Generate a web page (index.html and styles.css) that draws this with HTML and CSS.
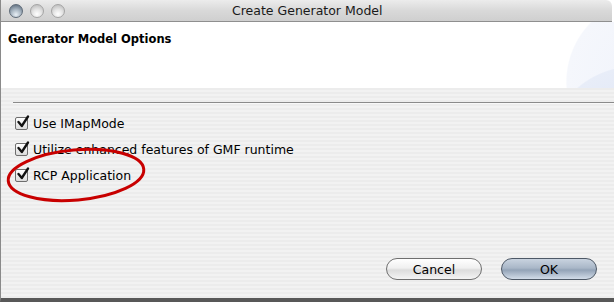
FILE: index.html
```html
<!DOCTYPE html>
<html lang="en">
<head>
  <meta charset="UTF-8">
  <title>Create Generator Model</title>
  <link rel="stylesheet" href="styles.css">
</head>
<body>
  <div class="window">
    <div class="titlebar">
      <div class="lights">
        <span class="light close"></span>
        <span class="light"></span>
        <span class="light"></span>
      </div>
      <div class="title">Create Generator Model</div>
    </div>

    <div class="banner">
      <h1>Generator Model Options</h1>
    </div>

    <div class="content">
      <div class="separator"></div>

      <div class="options">
        <label class="option"><span class="check"><svg viewBox="0 0 14 14"><path d="M2.5 7 L5.8 11 L12 1.5" /></svg></span>Use IMapMode</label>
        <label class="option"><span class="check"><svg viewBox="0 0 14 14"><path d="M2.5 7 L5.8 11 L12 1.5" /></svg></span>Utilize enhanced features of GMF runtime</label>
        <label class="option"><span class="check"><svg viewBox="0 0 14 14"><path d="M2.5 7 L5.8 11 L12 1.5" /></svg></span>RCP Application</label>
      </div>

      <!-- hand-drawn annotation around the last option -->
      <svg class="circle" viewBox="0 0 144 60">
        <ellipse cx="71" cy="29" rx="68" ry="25" transform="rotate(-5 71 29)" />
      </svg>

      <div class="actions">
        <button class="btn">Cancel</button>
        <button class="btn default">OK</button>
      </div>
    </div>
  </div>
</body>
</html>
```

FILE: styles.css
```css
body {
  margin: 0;
  padding: 0;
  background: #fff;
  font-family: "DejaVu Sans", "Liberation Sans", sans-serif;
  font-size: 13px;
  color: #000;
}
.window {
  width: 614px;
  height: 302px;
  display: flex;
  flex-direction: column;
  box-sizing: border-box;
  border-left: 1px solid #8a8a8a;
  border-bottom: 4px solid #585858;
  overflow: hidden;
}
.titlebar {
  height: 21px;
  flex: none;
  display: flex;
  align-items: center;
  background: linear-gradient(#ececec, #d9d9d9 50%, #cfcfcf);
  border-bottom: 1px solid #8f8f8f;
  border-top-right-radius: 6px;
  margin-right: 2px;
}
.lights {
  display: flex;
  gap: 7px;
  padding-left: 8px;
  width: 200px;
}
.light {
  width: 14px;
  height: 14px;
  border-radius: 50%;
  border: 1px solid #a5a5a5;
  background: radial-gradient(circle at 50% 75%, #ffffff 0, #e6e6e6 40%, #c4c4c4 80%);
  box-sizing: border-box;
}
.light.close {
  border-color: #5f6b78;
  background: radial-gradient(circle at 50% 80%, #e9f0f6 0, #a9b6c2 45%, #5f6f80 90%);
}
.title {
  font-size: 12.5px;
  color: #1a1a1a;
  margin-left: 23px;
}
.banner {
  height: 66px;
  flex: none;
  background:
    radial-gradient(ellipse 140px 110px at 640px 110px, #dfe6f6 0, #e8edf8 60%, rgba(255,255,255,0) 61%),
    radial-gradient(ellipse 120px 120px at 650px 60px, #f0f3fb 0, #f5f7fc 70%, rgba(255,255,255,0) 71%),
    #fff;
  padding: 10px 7px 0;
  box-sizing: border-box;
}
.banner h1 {
  margin: 0;
  font-size: 11.5px;
  font-weight: bold;
  color: #000;
}
.content {
  flex: 1;
  position: relative;
  background: repeating-linear-gradient(#ececec 0, #ececec 2px, #f2f2f2 2px, #f2f2f2 4px);
  padding: 14px 0 0 12px;
  display: flex;
  flex-direction: column;
}
.separator {
  height: 1px;
  background: #8a8a8a;
  border-bottom: 1px solid #f8f8f8;
}
.options {
  display: flex;
  flex-direction: column;
  gap: 10px;
  padding: 11px 0 0 2px;
}
.option {
  display: flex;
  align-items: center;
  gap: 5px;
  height: 16px;
  font-size: 12.5px;
}
.check {
  width: 13px;
  height: 13px;
  box-sizing: border-box;
  border: 1px solid #6e6e6e;
  border-radius: 2px;
  background: linear-gradient(#ffffff, #dcdcdc);
  position: relative;
}
.check svg {
  position: absolute;
  left: 0;
  top: -3px;
  width: 14px;
  height: 14px;
}
.check path {
  fill: none;
  stroke: #111;
  stroke-width: 2.3;
  stroke-linecap: round;
  stroke-linejoin: round;
}
.circle {
  position: absolute;
  left: 4px;
  top: 58px;
  width: 144px;
  height: 60px;
  overflow: visible;
}
.circle ellipse {
  fill: none;
  stroke: #c80000;
  stroke-width: 3;
}
.actions {
  margin-top: auto;
  display: flex;
  justify-content: flex-end;
  gap: 19px;
  padding: 0 17px 18px 0;
}
.btn {
  width: 96px;
  height: 22px;
  border-radius: 11px;
  border: 1px solid #6f6f6f;
  background: linear-gradient(#ffffff, #f0f0f0 45%, #dcdcdc 55%, #f4f4f4);
  font-family: "DejaVu Sans", "Liberation Sans", sans-serif;
  font-size: 12.5px;
  color: #000;
  padding: 0;
}
.btn.default {
  border-color: #4d5866;
  background: linear-gradient(#c9d3df, #a9b7c8 45%, #93a3b7 55%, #d2dce8);
}
```
